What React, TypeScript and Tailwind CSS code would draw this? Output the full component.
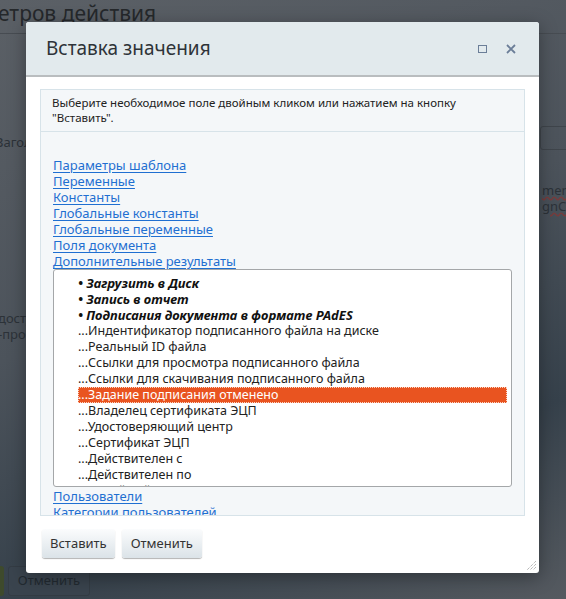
import React from "react";

const links1 = [
  "Параметры шаблона",
  "Переменные",
  "Константы",
  "Глобальные константы",
  "Глобальные переменные",
  "Поля документа",
  "Дополнительные результаты",
];

const items: { t: string; b?: boolean; sel?: boolean }[] = [
  { t: "• Загрузить в Диск", b: true },
  { t: "• Запись в отчет", b: true },
  { t: "• Подписания документа в формате PAdES", b: true },
  { t: "...Индентификатор подписанного файла на диске" },
  { t: "...Реальный ID файла" },
  { t: "...Ссылки для просмотра подписанного файла" },
  { t: "...Ссылки для скачивания подписанного файла" },
  { t: "...Задание подписания отменено", sel: true },
  { t: "...Владелец сертификата ЭЦП" },
  { t: "...Удостоверяющий центр" },
  { t: "...Сертификат ЭЦП" },
  { t: "...Действителен с" },
  { t: "...Действителен по" },
  { t: "...Серийный номер" },
];

export default function App() {
  return (
    <div
      className="relative w-[566px] h-[599px] overflow-hidden bg-[linear-gradient(160deg,#5b6066_0%,#4c535b_45%,#36414b_75%,#555a60_100%)]"
      style={{ fontFamily: '"Noto Sans", "Open Sans", sans-serif' }}
    >
      {/* obscured page behind */}
      <div className="absolute left-0 top-0 w-[566px] h-[34px] border-b border-[#474c52]">
        <div className="text-[21px] leading-[26px] text-[#25282b] -ml-[2px]">етров действия</div>
      </div>
      <div className="absolute left-[-4px] top-[133px] text-[13px] text-[#2c3238]">Загол</div>
      <div className="absolute left-[-2px] top-[310px] text-[13px] leading-[16px] text-[#2c3238]">
        <div>досту</div>
        <div>-про</div>
      </div>
      <div className="absolute left-[540px] top-[126px] w-[40px] h-[24px] border border-[#3f454b] rounded-[3px]" />
      <div className="absolute left-[542px] top-[182px] text-[13px] leading-[16px] text-[#2c3238]">
        <div className="underline decoration-wavy decoration-[#7a3a3a]">ment</div>
        <div className="underline decoration-wavy decoration-[#7a3a3a]">gnCa</div>
      </div>
      <div className="absolute left-[-6px] top-[566px] w-[10px] h-[30px] rounded-[3px] bg-[#3e4a2c]" />
      <div className="absolute left-[8px] top-[566px] w-[82px] h-[30px] rounded-[3px] bg-[#3a444e] border border-[#343c44] flex items-center justify-center text-[13px] text-[#222a31]">
        Отменить
      </div>

      {/* dialog */}
      <div className="absolute left-[26px] top-[22px] w-[513px] h-[551px] bg-white rounded-[3px] shadow-[0_4px_18px_rgba(0,0,0,0.35)] flex flex-col">
        <div className="h-[55px] shrink-0 bg-[#e2eaed] border-b-2 border-[#b9bdbf] rounded-t-[3px] flex items-center justify-between pl-[20px] pr-[23px]">
          <div className="text-[19px] text-[#2e3338]">Вставка значения</div>
          <div className="flex items-center gap-[19px]">
            <div className="w-[9px] h-[8px] border-[1.5px] border-[#6b7e98]" />
            <svg width="10" height="10" viewBox="0 0 10 10">
              <path d="M1 1 L9 9 M9 1 L1 9" stroke="#6b7e98" strokeWidth="1.8" />
            </svg>
          </div>
        </div>

        <div className="px-[14px] pt-[12px] flex flex-col">
          <div className="h-[427px] bg-[#f4f7f9] border border-[#d7e3e9] overflow-hidden flex flex-col">
            <div className="h-[42px] shrink-0 border-b border-[#d7e3e9] pl-[11px] pt-[5px] text-[11.5px] leading-[15px] text-[#222]">
              Выберите необходимое поле двойным кликом или нажатием на кнопку
              <br />
              "Вставить".
            </div>
            <div className="pl-[12px] pr-[12px] pt-[25px] flex flex-col">
              {links1.map((l) => (
                <a key={l} className="text-[13px] leading-[16px] text-[#1f6fd1] underline underline-offset-[2px] self-start">
                  {l}
                </a>
              ))}
              <div className="h-[218px] bg-white border border-[#a4a7a9] rounded-[3px] overflow-hidden pl-[24px] pr-[4px] pt-[5px]">
                {items.map((it) => (
                  <div
                    key={it.t}
                    className={
                      "leading-[16px] whitespace-nowrap " +
                      (it.b ? "text-[13px] font-bold italic text-[#111] " : "text-[12.5px] text-[#222] ") +
                      (it.sel ? "bg-[#e95420] text-white outline-1 outline-dotted outline-[#fbd6c6] -outline-offset-1" : "")
                    }
                  >
                    {it.t}
                  </div>
                ))}
              </div>
              <a className="mt-[1px] text-[13px] leading-[16px] text-[#1f6fd1] underline underline-offset-[2px] self-start">Пользователи</a>
              <a className="text-[13px] leading-[16px] text-[#1f6fd1] underline underline-offset-[2px] self-start">Категории пользователей</a>
            </div>
          </div>

          <div className="flex gap-[7px] mt-[13px] pl-[2px]">
            <button className="h-[29px] px-[8px] rounded-[3px] bg-[linear-gradient(#fbfcfd,#dbe3e8)] shadow-[0_1px_1px_rgba(0,0,0,0.3)] text-[13px] text-[#333]">
              Вставить
            </button>
            <button className="h-[29px] px-[9px] rounded-[3px] bg-[linear-gradient(#fbfcfd,#dbe3e8)] shadow-[0_1px_1px_rgba(0,0,0,0.3)] text-[13px] text-[#333]">
              Отменить
            </button>
          </div>
        </div>

        <svg className="absolute right-[2px] bottom-[2px]" width="12" height="12" viewBox="0 0 12 12">
          <path d="M11 2 L2 11 M11 5 L5 11 M11 8 L8 11" stroke="#9a9a9a" strokeWidth="1" strokeDasharray="1 1" />
        </svg>
      </div>
    </div>
  );
}
